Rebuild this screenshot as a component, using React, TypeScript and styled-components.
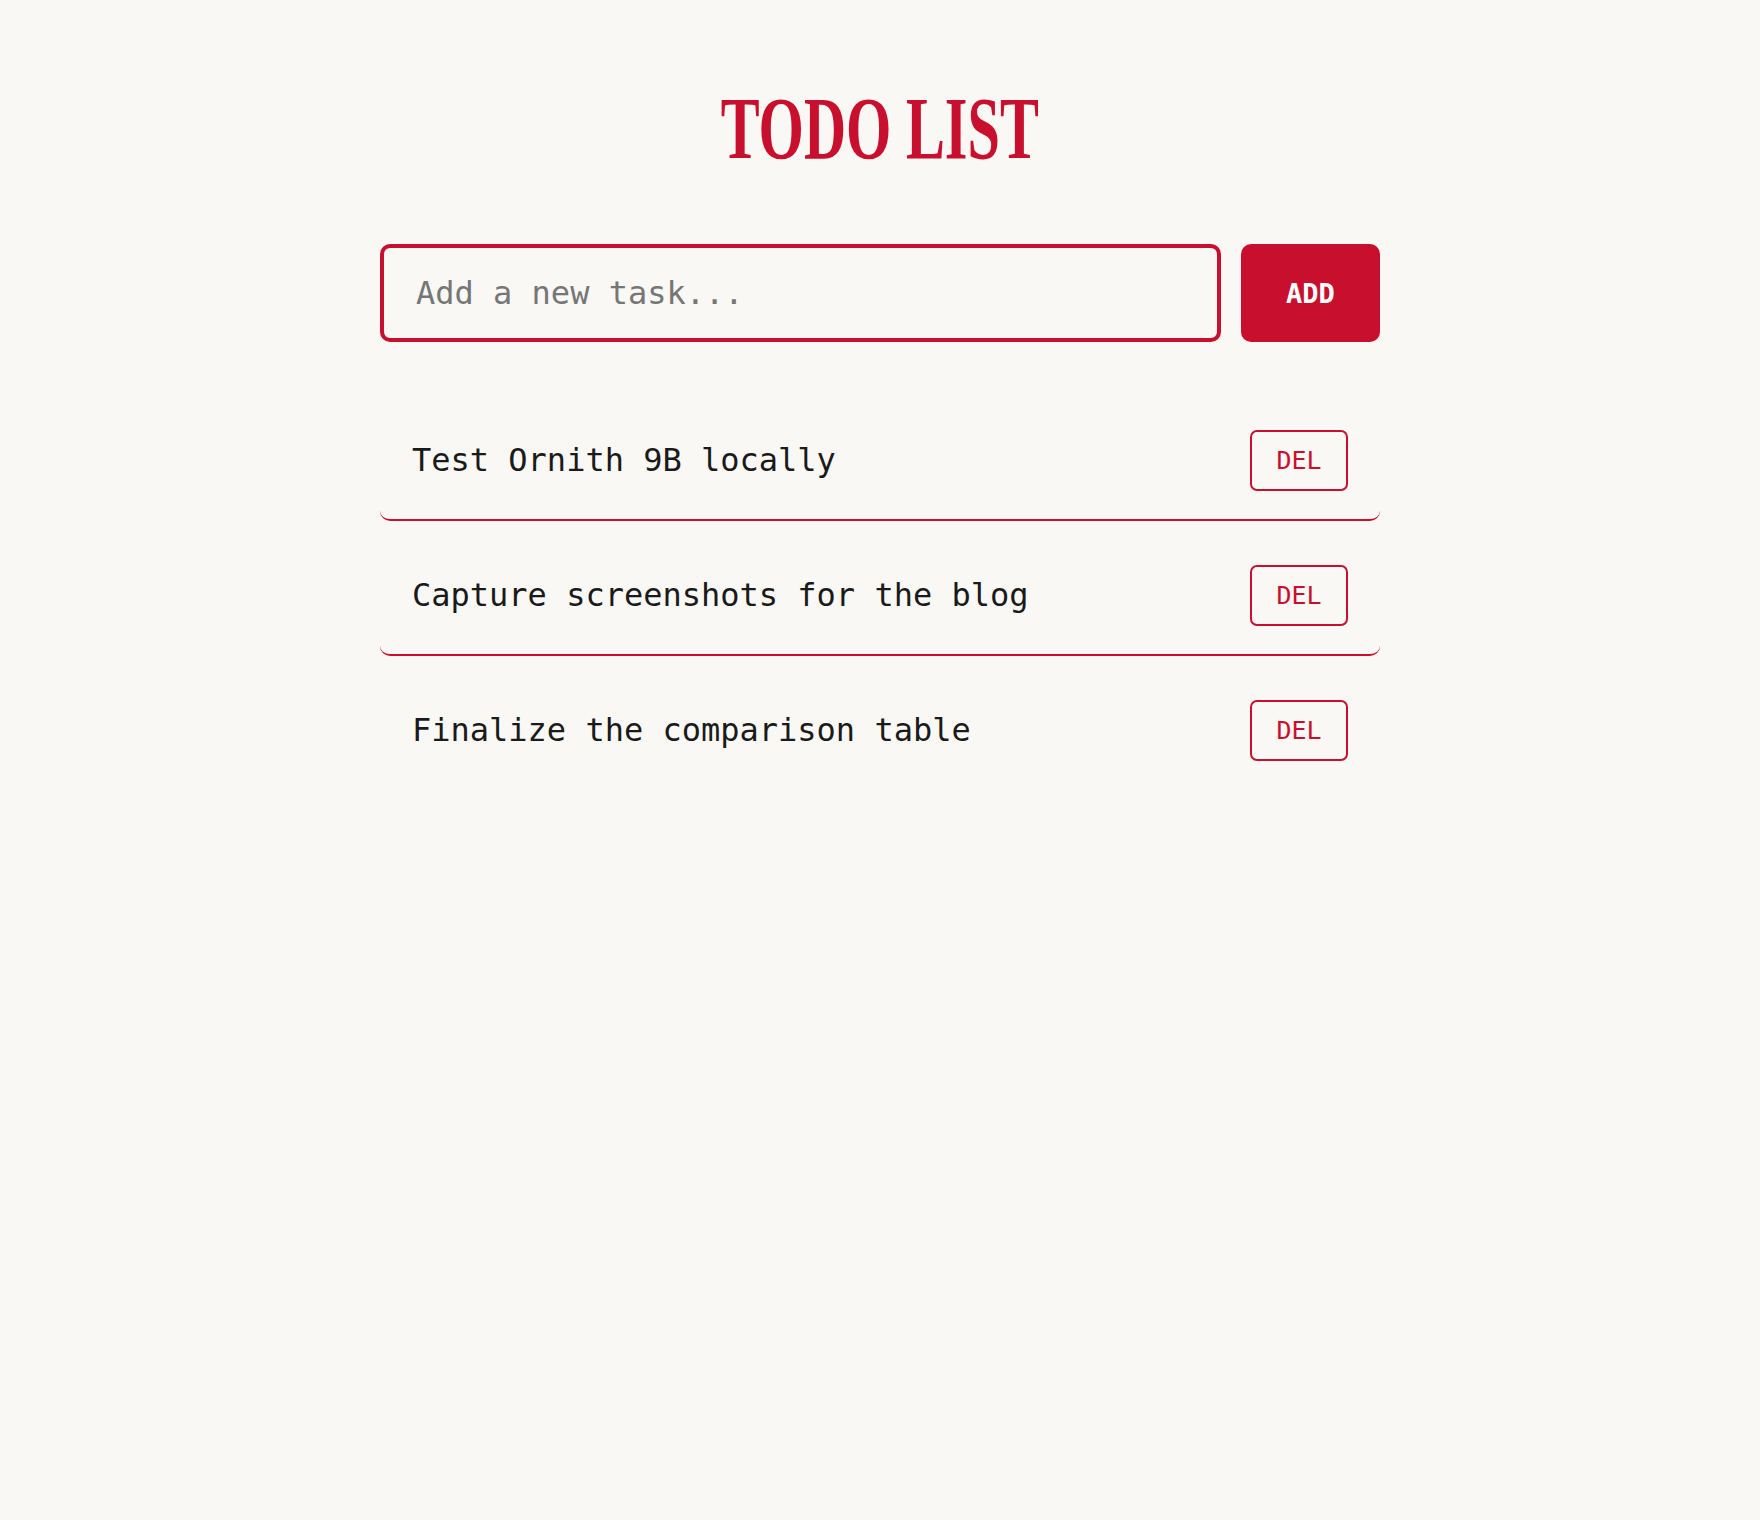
import styled, { createGlobalStyle } from 'styled-components';

const RED = '#c8102e';
const MONO = '"DejaVu Sans Mono", "Liberation Mono", monospace';

const GlobalStyle = createGlobalStyle`
  body {
    margin: 0;
    background-color: #f9f8f4;
    font-family: ${MONO};
  }
`;

const Page = styled.main`
  width: 1000px;
  margin: 0 auto;
  padding-top: 84px;
`;

const Header = styled.header`
  display: flex;
  justify-content: center;
  margin-bottom: 72px;
`;

/* narrow display serif: squeeze a bold serif horizontally */
const Title = styled.h1`
  margin: 0;
  display: inline-block;
  font-family: "Liberation Serif", "Times New Roman", serif;
  font-weight: 700;
  font-size: 89px;
  line-height: 88px;
  color: ${RED};
  transform: scaleX(0.655);
`;

const Form = styled.form`
  display: flex;
  gap: 20px;
  margin-bottom: 59px;
`;

const TaskInput = styled.input`
  flex: 1;
  height: 98px;
  box-sizing: border-box;
  padding: 0 32px;
  border: 4px solid ${RED};
  border-radius: 10px;
  background: transparent;
  outline: none;
  font-family: ${MONO};
  font-size: 32px;
  color: #1a1a1a;
  &::placeholder {
    color: #767676;
  }
`;

const AddButton = styled.button`
  width: 139px;
  height: 98px;
  border: none;
  border-radius: 10px;
  background-color: ${RED};
  color: white;
  font-family: ${MONO};
  font-size: 27px;
  font-weight: 700;
  cursor: pointer;
`;

const List = styled.ul`
  list-style: none;
  margin: 0;
  padding: 0;
  display: flex;
  flex-direction: column;
  gap: 15px;
`;

const Item = styled.li`
  display: flex;
  align-items: center;
  justify-content: space-between;
  height: 120px;
  box-sizing: border-box;
  padding: 0 32px;
  border-bottom: 2px solid ${RED};
  border-radius: 0 0 10px 10px;
  &:last-child {
    border-bottom-color: transparent;
  }
`;

const ItemText = styled.span`
  font-size: 32px;
  color: #1a1a1a;
`;

const DelButton = styled.button`
  width: 98px;
  height: 61px;
  box-sizing: border-box;
  border: 2px solid ${RED};
  border-radius: 7px;
  background: transparent;
  color: ${RED};
  font-family: ${MONO};
  font-size: 25px;
  cursor: pointer;
`;

const tasks = [
  'Test Ornith 9B locally',
  'Capture screenshots for the blog',
  'Finalize the comparison table',
];

function App() {
  return (
    <>
      <GlobalStyle />
      <Page>
        <Header>
          <Title>TODO LIST</Title>
        </Header>
        <Form onSubmit={(e) => e.preventDefault()}>
          <TaskInput placeholder="Add a new task..." />
          <AddButton type="submit">ADD</AddButton>
        </Form>
        <List>
          {tasks.map((task) => (
            <Item key={task}>
              <ItemText>{task}</ItemText>
              <DelButton>DEL</DelButton>
            </Item>
          ))}
        </List>
      </Page>
    </>
  );
}

export default App;
